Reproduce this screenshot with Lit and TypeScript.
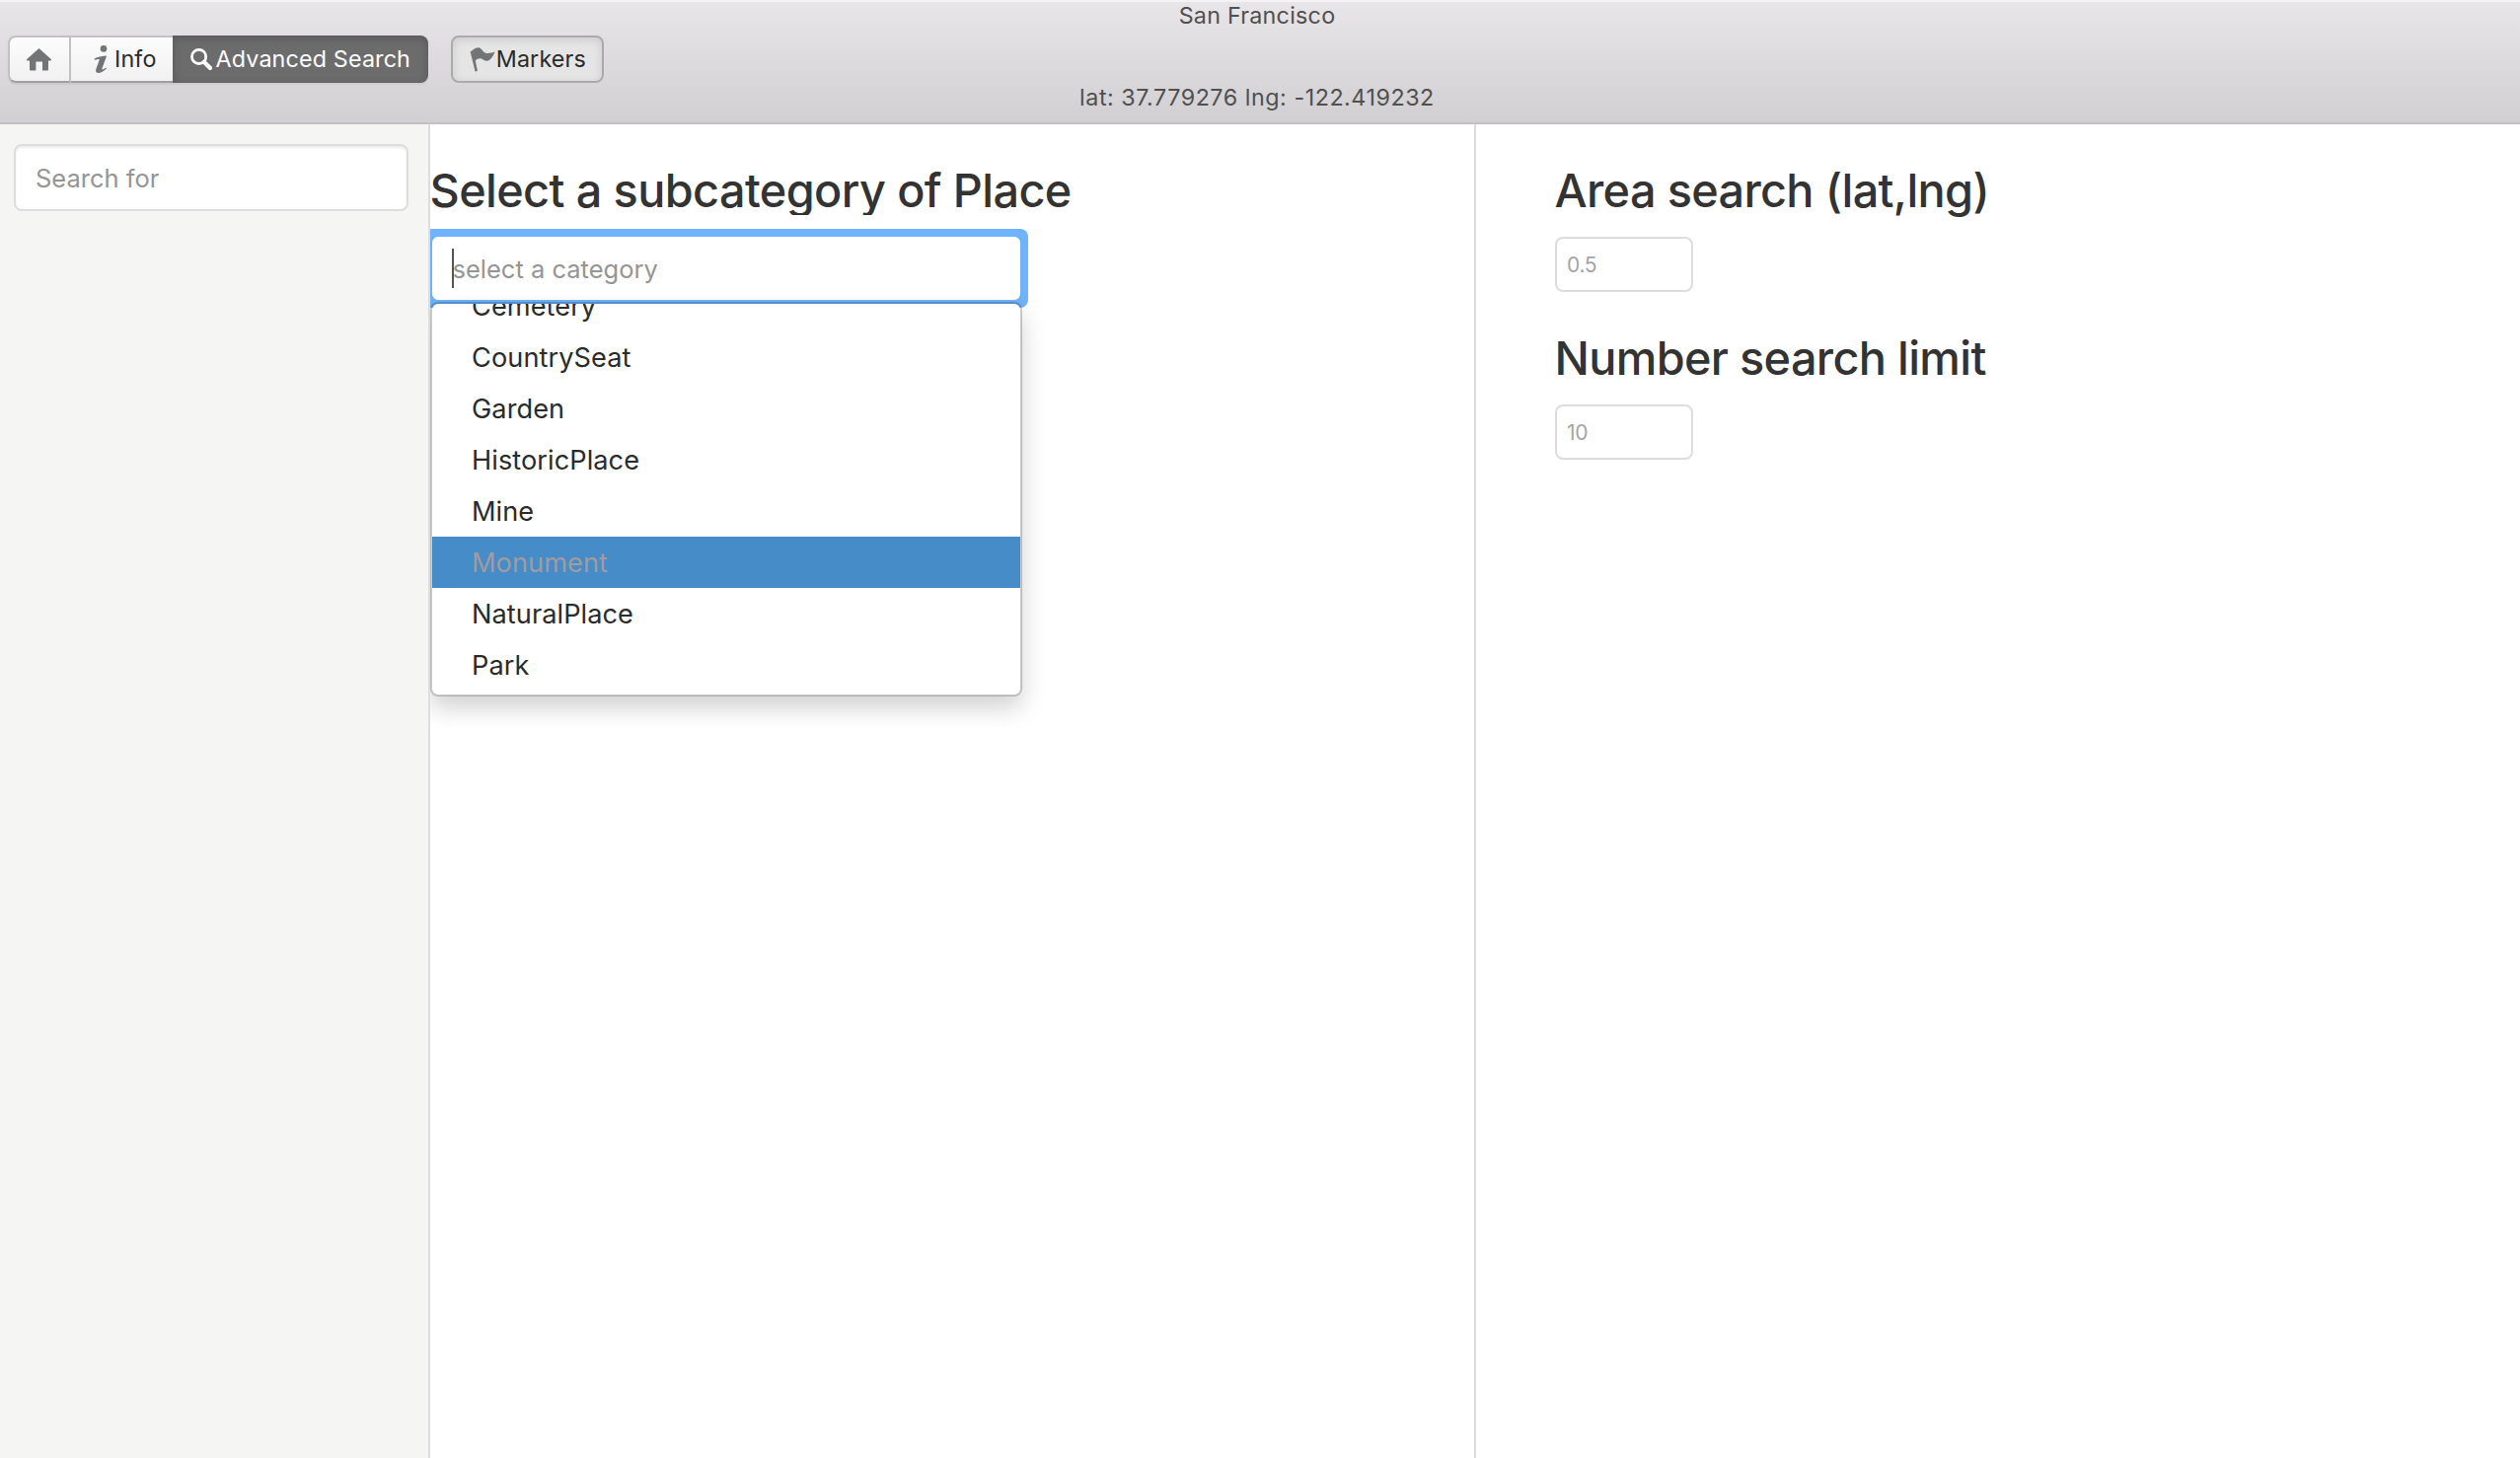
import { LitElement, html, css, svg } from "lit";
import { customElement, property } from "lit/decorators.js";

const icons = {
  home: { w: 25, h: 23, body: svg`<path d="M12.5 0 L25 11.2 Q25.2 12.4 24 12.4 H22 V21.5 Q22 22.5 21 22.5 H16 V13.5 H9.4 V22.5 H4 Q3 22.5 3 21.5 V12.4 H1 Q-0.2 12.4 0 11.2 Z"/>` },
  info: { w: 14, h: 28, body: svg`<circle cx="10" cy="3.4" r="3.3"/><path d="M0.8 13.6 C4 11.6 7.5 11.2 12.4 10.6 C12.9 10.6 12.9 11 12.8 11.4 L8.5 23.2 C8.1 24.8 9.2 25 12 22.8 C12.8 22.3 13.2 23 12.6 23.7 C10 26.3 7 28 4.4 27.9 C2 27.8 1.7 26 2.4 23.8 L5.6 15 C6 13.7 4.8 13.6 1.4 14.7 C0.7 14.8 0.3 14.1 0.8 13.6 Z"/>` },
  search: { w: 22, h: 22, body: svg`<circle cx="8.6" cy="8.4" r="7.1" fill="none" stroke="currentColor" stroke-width="2.8"/><path d="M14 13.9 L20 19.9" fill="none" stroke="currentColor" stroke-width="4.2" stroke-linecap="round"/>` },
  flag: { w: 26, h: 25, body: svg`<path d="M0.6 4.2 C3 3.6 4.6 0.4 9 0.2 C12.6 0.4 12.8 5.4 17.6 6 C20.8 6.2 23.6 5 25.6 4.8 C23.6 8.6 21.6 13.4 17.4 13.8 C14 13.6 13.6 11.2 10.4 11.2 C8 11.2 6.6 12.4 5.8 13.8 L8 24 L5.6 24.4 Z"/>` },
};

@customElement("tool-icon")
export class ToolIcon extends LitElement {
  @property() name: keyof typeof icons = "home";
  static styles = css`
    :host { display: block; flex: none; }
    svg { display: block; overflow: visible; fill: currentColor; }
  `;
  render() {
    const i = icons[this.name];
    return html`<svg width=${i.w} height=${i.h} viewBox="0 0 ${i.w} ${i.h}">${i.body}</svg>`;
  }
}

@customElement("app-root")
export class AppRoot extends LitElement {
  private categories = ["Cemetery", "CountrySeat", "Garden", "HistoricPlace", "Mine", "Monument", "NaturalPlace", "Park"];
  private active = "Monument";

  static styles = css`
    * { box-sizing: border-box; }
    :host {
      display: flex; flex-direction: column; height: 100vh; overflow: hidden;
      background: #fff; color: #333; cursor: default;
      font-family: Inter, "Liberation Sans", sans-serif; font-size: 23.3px;
    }
    .header {
      flex: none; height: 126px; display: flex; flex-direction: column;
      border-bottom: 2px solid #c2c0c2;
      background: linear-gradient(to bottom, #e8e6e8, #d1cfd1);
      box-shadow: inset 0 2px 0 #f5f4f5;
    }
    .title { height: 31px; line-height: 31px; padding-right: 6px; text-align: center; color: #505050; letter-spacing: 0.24px; white-space: nowrap; }
    .coords { line-height: 30px; letter-spacing: 0.53px; }
    .toolbar { display: flex; gap: 23px; height: 48px; margin-top: 5px; padding-left: 8px; }
    .group { display: flex; border-radius: 8px; box-shadow: 0 2px 2px rgba(0,0,0,.06); }
    .btn {
      display: flex; align-items: center; height: 48px; white-space: nowrap; letter-spacing: 0.15px; color: #2b2b2b;
      border: 2px solid #c2c0c2; border-bottom-color: #a19fa1; border-left-width: 0;
      background: linear-gradient(to bottom, #fcfcfc, #f1f1f1);
    }
    .label { padding-bottom: 2px; }
    tool-icon { color: #737475; }
    .home { width: 64px; padding-left: 17px; border-left-width: 2px; border-radius: 8px 0 0 8px; }
    .info { width: 103px; padding-left: 23px; gap: 7px; border-right: 0; }
    .adv {
      width: 259px; padding-left: 18px; gap: 3.5px; color: #fff; border: 0; border-radius: 0 8px 8px 0;
      background: #6d6c6d; box-shadow: inset 0 2px 10px rgba(0,0,0,.2);
    }
    .adv tool-icon { color: #fff; }
    .markers {
      width: 155px; padding-left: 17px; gap: 0.7px; border: 2px solid #ababab; border-radius: 8px;
      background: #e5e5e5; box-shadow: inset 0 2px 10px rgba(0,0,0,.12);
    }
    .body { flex: 1; min-height: 0; display: flex; }
    .sidebar { flex: none; width: 436px; padding: 20px 20px 0 14px; background: #f5f5f4; border-right: 2px solid #ddd; }
    .field {
      display: flex; align-items: center; height: 68px; width: 400px; padding: 0 0 0 20px;
      background: #fff; border: 2px solid #ddd; border-radius: 8px; color: #959595; font-size: 25.5px;
      box-shadow: inset 0 2px 2px rgba(0,0,0,.075); white-space: nowrap;
    }
    .main { flex: none; width: 1060px; padding-top: 42px; border-right: 2px solid #ddd; overflow: hidden; }
    .heading { margin: 0; height: 50px; line-height: 50px; font-size: 46.8px; font-weight: 500; white-space: nowrap; }
    .main .heading { overflow: hidden; text-indent: -0.5px; letter-spacing: -0.6px; }
    .picker { position: relative; margin-top: 14px; width: 606px; }
    .ring {
      width: 612px; height: 80px; margin-left: -6px; padding: 6px;
      background: #6fb3fa; border-radius: 8px;
    }
    .picker .field { width: 600px; border-color: #6fb3fa; padding-left: 20.5px; box-shadow: none; }
    .caret { position: absolute; left: 22px; top: 20px; width: 2px; height: 40px; background: #555; }
    .menu {
      position: absolute; left: 0; top: 74px; width: 600px; height: 400px;
      display: flex; flex-direction: column; justify-content: flex-end; overflow: hidden;
      padding-bottom: 4px; background: #fff; background-clip: padding-box;
      border: 2px solid rgba(0,0,0,.2); border-radius: 8px;
      box-shadow: 0 12px 24px rgba(0,0,0,.175);
    }
    .item { flex: none; height: 52px; line-height: 53px; padding-left: 40px; font-size: 27.2px; letter-spacing: 0.05px; color: #2b2b2b; }
    .item.active { background: #468cc9; color: #a09ba0; }
    .options { flex: 1; padding: 42px 0 0 80px; }
    .options .heading { letter-spacing: -0.65px; text-indent: -0.5px; }
    .small {
      display: flex; align-items: center; width: 140px; height: 56px; margin: 22px 0 42px; padding-left: 10px;
      border: 2px solid #ddd; border-radius: 8px; color: #a5a5a5; font-size: 21px; letter-spacing: -0.3px;
    }
  `;

  render() {
    return html`
      <header class="header">
        <div class="title">San Francisco</div>
        <div class="toolbar">
          <div class="group">
            <div class="btn home"><tool-icon name="home"></tool-icon></div>
            <div class="btn info"><tool-icon name="info"></tool-icon><span class="label">Info</span></div>
            <div class="btn adv"><tool-icon name="search"></tool-icon><span class="label">Advanced Search</span></div>
          </div>
          <div class="btn markers"><tool-icon name="flag"></tool-icon><span class="label">Markers</span></div>
        </div>
        <div class="title coords">lat: 37.779276 lng: -122.419232</div>
      </header>
      <div class="body">
        <aside class="sidebar"><div class="field">Search for</div></aside>
        <main class="main">
          <h1 class="heading">Select a subcategory of Place</h1>
          <div class="picker">
            <div class="ring"><div class="field">select a category</div></div>
            <span class="caret"></span>
            <div class="menu">
              ${this.categories.map((c) => html`<div class="item ${c === this.active ? "active" : ""}">${c}</div>`)}
            </div>
          </div>
        </main>
        <section class="options">
          <h1 class="heading">Area search (lat,lng)</h1>
          <div class="small">0.5</div>
          <h1 class="heading">Number search limit</h1>
          <div class="small">10</div>
        </section>
      </div>
    `;
  }
}
